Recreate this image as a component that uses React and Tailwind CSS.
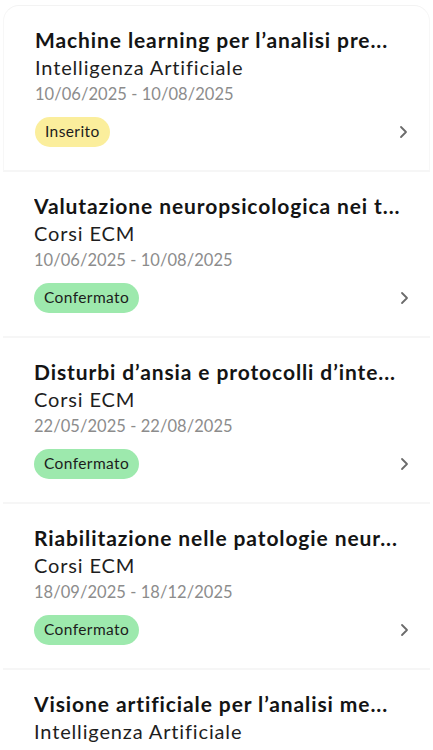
import React from 'react';

const courses = [
  { title: 'Machine learning per l’analisi pre...', category: 'Intelligenza Artificiale', dates: '10/06/2025 - 10/08/2025', status: 'Inserito' },
  { title: 'Valutazione neuropsicologica nei t...', category: 'Corsi ECM', dates: '10/06/2025 - 10/08/2025', status: 'Confermato' },
  { title: 'Disturbi d’ansia e protocolli d’inte...', category: 'Corsi ECM', dates: '22/05/2025 - 22/08/2025', status: 'Confermato' },
  { title: 'Riabilitazione nelle patologie neur...', category: 'Corsi ECM', dates: '18/09/2025 - 18/12/2025', status: 'Confermato' },
  { title: 'Visione artificiale per l’analisi me...', category: 'Intelligenza Artificiale', dates: '02/10/2025 - 02/12/2025', status: 'Inserito' },
];

const Badge = ({ status }) => (
  <span
    className={`inline-flex items-center h-[30px] px-[10px] rounded-full text-[15.5px] tracking-[0.4px] text-[#1c1c1c] ${
      status === 'Inserito' ? 'bg-[#fbee9c]' : 'bg-[#9de9ad]'
    }`}
  >
    {status}
  </span>
);

const CourseCard = ({ course, first }) => (
  <div
    className={`bg-white pl-[31px] pr-[20px] pt-[20px] pb-[23px] border-b-2 border-[#f6f6f6] ${
      first ? 'rounded-t-2xl border-t border-x border-t-[#f3f3f3] border-x-[#f7f7f7]' : ''
    }`}
  >
    <div className="whitespace-nowrap overflow-hidden text-[21px] leading-[27px] font-bold text-[#141414] tracking-[0.9px]">{course.title}</div>
    <div className="text-[20px] leading-[28px] text-[#1e1e1e] tracking-[0.85px]">{course.category}</div>
    <div className="text-[16.5px] leading-[27px] text-[#8c8c8c] tracking-[0.05px]">{course.dates}</div>
    <div className="flex items-center justify-between mt-[9px]">
      <Badge status={course.status} />
      <svg width="12" height="16" viewBox="0 0 12 16" fill="none">
        <path d="M4 3 L9 8 L4 13" stroke="#6b6b6b" strokeWidth="1.8" strokeLinecap="round" strokeLinejoin="round" />
      </svg>
    </div>
  </div>
);

export default function App() {
  return (
    <div className="min-h-screen bg-white px-[3px] pt-[5px]" style={{ fontFamily: 'Lato, "Noto Sans", sans-serif' }}>
      {courses.map((c, i) => (
        <CourseCard key={i} course={c} first={i === 0} />
      ))}
    </div>
  );
}
